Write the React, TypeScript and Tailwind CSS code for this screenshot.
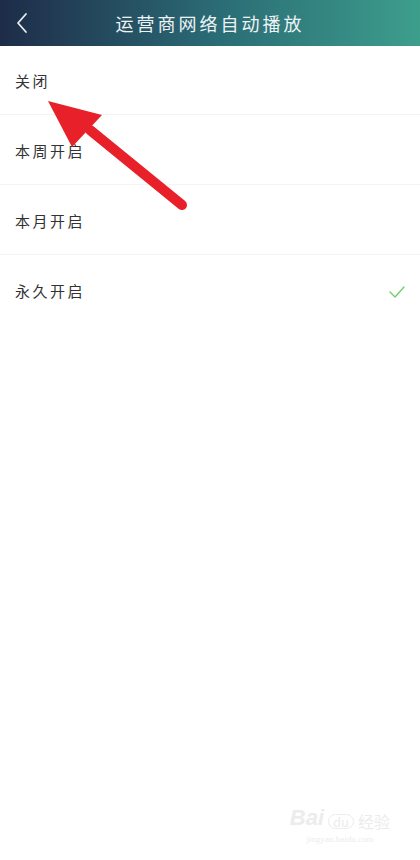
const options = [
    { label: '关闭', checked: false },
    { label: '本周开启', checked: false },
    { label: '本月开启', checked: false },
    { label: '永久开启', checked: true },
];

const font = { fontFamily: '"Noto Sans CJK SC", "Noto Sans", sans-serif' };

export default function App() {
    return (
        <div className="relative w-[420px] h-[860px] bg-white overflow-hidden" style={font}>
            <div className="relative h-[46px] flex items-center justify-center bg-gradient-to-r from-[#1d2c48] via-[#2a6a74] to-[#3d9e8c]">
                <svg className="absolute left-[15px] top-[12px]" width="14" height="22" viewBox="0 0 14 22" fill="none">
                    <path d="M11 2 L3 11 L11 20" stroke="#e8eef2" strokeWidth="1.8" strokeLinecap="round" strokeLinejoin="round" />
                </svg>
                <h1 className="text-[18px] tracking-[3px] text-[#eef3f5] font-normal">运营商网络自动播放</h1>
            </div>

            <div>
                {options.map((opt, i) => (
                    <div
                        key={opt.label}
                        className={`flex items-center justify-between pl-[15px] pr-[14px] pt-[3px] ${i === 0 ? 'h-[69px]' : 'h-[70px]'} ${i < options.length - 1 ? 'border-b border-[#f3f3f3]' : ''}`}
                    >
                        <span className="text-[15px] tracking-[2.5px] text-[#333]">{opt.label}</span>
                        {opt.checked && (
                            <svg width="18" height="14" viewBox="0 0 18 14" fill="none">
                                <path d="M2 7 L7 12 L16 2" stroke="#6fcf6f" strokeWidth="1.4" strokeLinecap="round" strokeLinejoin="round" />
                            </svg>
                        )}
                    </div>
                ))}
            </div>

            {/* red annotation arrow */}
            <svg className="absolute left-0 top-0 pointer-events-none" width="420" height="860">
                <line x1="90" y1="130" x2="182" y2="205" stroke="#e8202a" strokeWidth="10" strokeLinecap="round" />
                <polygon points="48,101 102,115 72,147" fill="#e8202a" />
            </svg>

            <div className="absolute right-[30px] bottom-[14px] flex flex-col items-center text-[#ececec]">
                <div className="flex items-end gap-1">
                    <span className="text-[22px] font-bold italic leading-none" style={{ fontFamily: '"Liberation Sans", sans-serif' }}>Bai</span>
                    <span className="text-[13px] border border-[#ececec] rounded-full px-1 leading-none">du</span>
                    <span className="text-[16px] leading-none">经验</span>
                </div>
                <span className="text-[9px] mt-1" style={{ fontFamily: '"Liberation Serif", serif' }}>jingyan.baidu.com</span>
            </div>
        </div>
    );
}
